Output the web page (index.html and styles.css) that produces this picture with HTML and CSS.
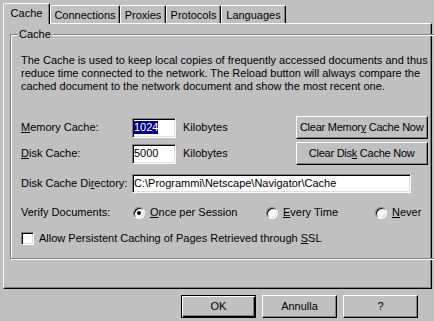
FILE: index.html
```html
<!DOCTYPE html>
<html lang="en">

<head>
    <meta charset="UTF-8">
    <title>Preferenze - Cache</title>
    <link rel="stylesheet" href="styles.css">
</head>

<body>
    <div class="dialog">
        <!-- schede -->
        <ul class="tabs">
            <li class="tab tab-cache current">Cache</li>
            <li class="tab tab-conn">Connections</li>
            <li class="tab tab-proxies">Proxies</li>
            <li class="tab tab-protocols">Protocols</li>
            <li class="tab tab-lang">Languages</li>
        </ul>

        <div class="panel">
            <fieldset class="group">
                <legend>Cache</legend>
                <p class="desc">The Cache is used to keep local copies of frequently accessed documents and thus<br>reduce time connected to the network. The Reload button will always compare the<br>cached document to the network document and show the most recent one.</p>

                <div class="row row-size">
                    <span class="lbl"><u>M</u>emory Cache:</span>
                    <span class="edit edit-num"><span class="selected">1024</span></span>
                    <span class="unit">Kilobytes</span>
                    <button class="btn btn-clear">Clear Memor<u>y</u> Cache Now</button>
                </div>
                <div class="row row-size row-disk">
                    <span class="lbl"><u>D</u>isk Cache:</span>
                    <span class="edit edit-num">5000</span>
                    <span class="unit">Kilobytes</span>
                    <button class="btn btn-clear">Clear Dis<u>k</u> Cache Now</button>
                </div>

                <div class="row row-dir">
                    <span class="lbl">Disk Cache Di<u>r</u>ectory:</span>
                    <span class="edit edit-dir">C:\Programmi\Netscape\Navigator\Cache</span>
                </div>

                <div class="row row-verify">
                    <span class="lbl">Verify Documents:</span>
                    <span class="option option-once"><span class="radio on"></span><u>O</u>nce per Session</span>
                    <span class="option option-every"><span class="radio"></span><u>E</u>very Time</span>
                    <span class="option"><span class="radio"></span><u>N</u>ever</span>
                </div>

                <div class="row row-check">
                    <span class="check"></span>
                    <span>Allow Persistent Caching of Pages Retrieved through <u>S</u>SL</span>
                </div>
            </fieldset>
        </div>

        <div class="actions">
            <button class="btn btn-action default">OK</button>
            <button class="btn btn-action">Annulla</button>
            <button class="btn btn-action">?</button>
        </div>
    </div>
</body>

</html>
```

FILE: styles.css
```css
* {
    margin: 0;
    padding: 0;
    list-style: none;
    box-sizing: border-box;
}

body {
    width: 434px;
    height: 321px;
    overflow: hidden;
    background: #c0c0c0;
    color: #000;
    font-family: "Liberation Sans", Arial, sans-serif;
    font-size: 11px;
    line-height: 13px;
}

u {
    text-decoration: underline;
    text-underline-offset: 1px;
}

.dialog {
    padding: 3px 2px 0 3px;
}

/* schede */
.tabs {
    display: flex;
    align-items: flex-end;
    height: 20px;
}

.tab {
    height: 18px;
    padding-top: 3px;
    text-align: center;
    white-space: nowrap;
    border: 1px solid;
    border-bottom: 0;
    border-color: #fff #000 transparent #fff;
    border-radius: 2px 2px 0 0;
    box-shadow: inset -1px 0 #808080;
}

.tab.current {
    position: relative;
    height: 21px;
    margin-bottom: -1px;
    background: #c0c0c0;
}

.tab-cache { width: 47px; }
.tab-conn { width: 70px; }
.tab-proxies { width: 46px; }
.tab-protocols { width: 55px; }
.tab-lang { width: 65px; }

.panel {
    width: 429px;
    height: 266px;
    padding: 4px 0 0 6px;
    border: 1px solid;
    border-color: #fff #000 #000 #fff;
    box-shadow: inset -1px -1px #808080;
}

/* riquadro Cache */
.group {
    width: 412px;
    padding: 13px 9px 13px 10px;
    border: 1px solid #808080;
    box-shadow: inset 1px 1px #fff, 1px 1px #fff;
}

.group legend {
    margin-left: -4px;
    padding: 0 2px;
    background: #c0c0c0;
}

.desc {
    white-space: nowrap;
}

.row {
    display: flex;
    align-items: center;
    white-space: nowrap;
}

.row-size {
    height: 23px;
    margin-top: 23px;
}

.row-disk {
    margin-top: 3px;
}

.row-dir {
    height: 19px;
    margin-top: 9px;
}

.row-verify {
    height: 13px;
    margin-top: 13px;
}

.row-check {
    height: 13px;
    margin-top: 13px;
}

.lbl {
    width: 111px;
    flex-shrink: 0;
}

/* campi di testo */
.edit {
    display: flex;
    align-items: center;
    height: 20px;
    padding-left: 1px;
    background: #fff;
    border: 1px solid;
    border-color: #808080 #fff #fff #808080;
    box-shadow: inset 1px 1px #000, inset -1px -1px #dfdfdf;
}

.edit-num {
    width: 44px;
}

.edit-dir {
    width: 279px;
    height: 19px;
}

.selected {
    background: #000080;
    color: #fff;
}

.unit {
    margin-left: 7px;
}

/* pulsanti */
.btn {
    height: 23px;
    padding: 0;
    background: #c0c0c0;
    color: #000;
    font: inherit;
    border: 1px solid;
    border-color: #fff #000 #000 #fff;
    box-shadow: inset -1px -1px #808080;
    cursor: pointer;
}

.btn-clear {
    width: 132px;
    margin-left: auto;
    letter-spacing: -0.25px;
}

.btn-action {
    width: 75px;
}

.btn.default {
    border-color: #000;
    box-shadow: inset 1px 1px #fff, inset -1px -1px #000, inset -2px -2px #808080;
}

/* opzioni */
.option {
    display: flex;
    align-items: center;
}

.option-once {
    width: 133px;
    margin-left: 1px;
}

.option-every {
    width: 109px;
}

.radio {
    position: relative;
    width: 12px;
    height: 12px;
    margin-right: 5px;
    border-radius: 50%;
    background: #fff;
    border: 1px solid;
    border-color: #808080 #fff #fff #808080;
    box-shadow: inset 1px 1px #000, inset -1px -1px #dfdfdf;
}

.radio.on::after {
    content: "";
    position: absolute;
    left: 3px;
    top: 3px;
    width: 4px;
    height: 4px;
    border-radius: 50%;
    background: #000;
}

.check {
    width: 13px;
    height: 13px;
    margin-right: 5px;
    background: #fff;
    border: 1px solid;
    border-color: #808080 #fff #fff #808080;
    box-shadow: inset 1px 1px #000, inset -1px -1px #dfdfdf;
}

.actions {
    display: flex;
    justify-content: flex-end;
    gap: 6px;
    margin-top: 6px;
    padding-right: 14px;
}
```
